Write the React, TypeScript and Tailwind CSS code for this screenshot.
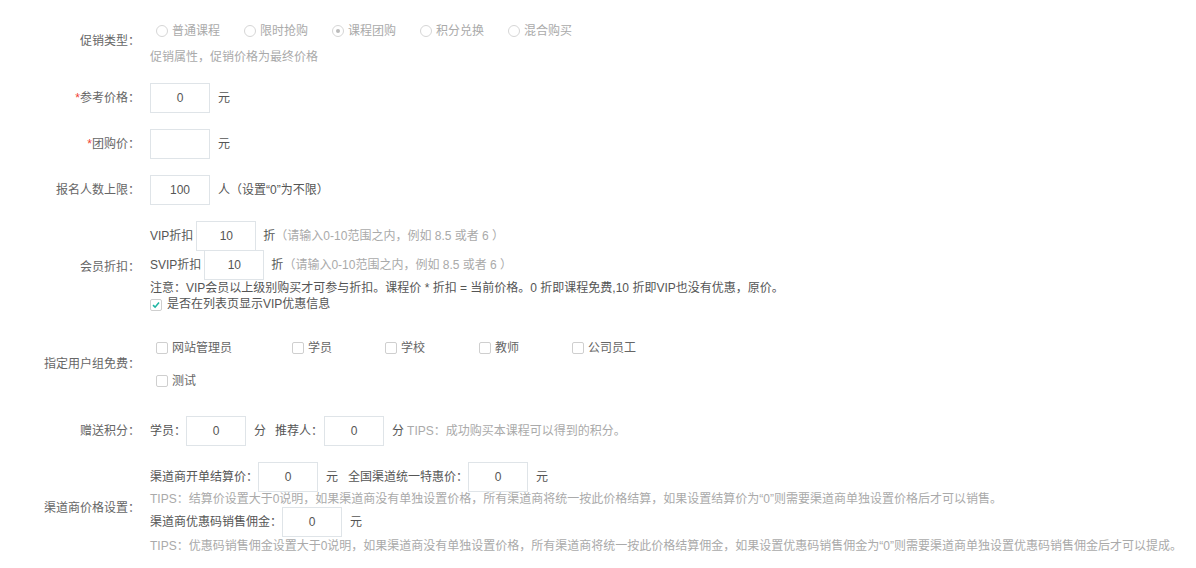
import React from 'react';

const Label = ({ children, required }: { children: React.ReactNode; required?: boolean }) => (
  <div className="w-[140px] shrink-0 text-right text-[#666]">
    {required && <span className="text-[#f04134]">*</span>}
    {children}
  </div>
);

const Box = ({ value = '', className = '' }: { value?: string; className?: string }) => (
  <input
    readOnly
    value={value}
    className={`w-[60px] h-[30px] border border-[#dfe4e8] bg-white text-center text-[#555] outline-none ${className}`}
  />
);

const Radio = ({ label, checked }: { label: string; checked?: boolean }) => (
  <span className="inline-flex items-center gap-[4px] text-[#aaa]">
    <span className="w-[12px] h-[12px] rounded-full border border-[#d6d6d6] flex items-center justify-center">
      {checked && <span className="w-[4px] h-[4px] rounded-full bg-[#bbb]"></span>}
    </span>
    {label}
  </span>
);

const Check = ({ checked }: { checked?: boolean }) => (
  <span className="w-[12px] h-[12px] rounded-[2px] border border-[#cfcfcf] bg-white flex items-center justify-center shrink-0">
    {checked && (
      <svg width="8" height="8" viewBox="0 0 8 8">
        <path d="M1 4.2 L3.1 6.2 L7 1.6" fill="none" stroke="#1fb5a3" strokeWidth="1.6" />
      </svg>
    )}
  </span>
);

const App = () => {
  const promoTypes = [
    { label: '普通课程' },
    { label: '限时抢购' },
    { label: '课程团购', checked: true },
    { label: '积分兑换' },
    { label: '混合购买' },
  ];

  const groups = [
    { name: '网站管理员', w: 'w-[136px]' },
    { name: '学员', w: 'w-[93px]' },
    { name: '学校', w: 'w-[94px]' },
    { name: '教师', w: 'w-[93px]' },
    { name: '公司员工', w: 'w-[93px]' },
    { name: '测试', w: 'w-[93px]' },
  ];

  return (
    <div className="min-h-[568px] bg-white text-[12px] text-[#555] font-['Liberation_Sans','Noto_Sans_CJK_SC',sans-serif] pt-[21px]">
      {/* 促销类型 */}
      <div className="flex items-start gap-[10px]">
        <div className="pt-[10px] leading-5">
          <Label>促销类型：</Label>
        </div>
        <div>
          <div className="flex gap-[24px] pl-[6px] leading-5">
            {promoTypes.map((t, i) => (
              <Radio key={i} label={t.label} checked={t.checked} />
            ))}
          </div>
          <div className="mt-[6px] leading-5 text-[#aaa]">促销属性，促销价格为最终价格</div>
        </div>
      </div>

      {/* 参考价格 */}
      <div className="mt-[16px] flex items-center gap-[10px]">
        <Label required>参考价格：</Label>
        <Box value="0" />
        <span className="ml-[-2px]">元</span>
      </div>

      {/* 团购价 */}
      <div className="mt-[16px] flex items-center gap-[10px]">
        <Label required>团购价：</Label>
        <Box />
        <span className="ml-[-2px]">元</span>
      </div>

      {/* 报名人数上限 */}
      <div className="mt-[16px] flex items-center gap-[10px]">
        <Label>报名人数上限：</Label>
        <Box value="100" />
        <span className="ml-[-2px]">人（设置“0”为不限）</span>
      </div>

      {/* 会员折扣 */}
      <div className="mt-[16px] flex items-center gap-[10px]">
        <Label>会员折扣：</Label>
        <div>
          <div className="flex items-center">
            <span>VIP折扣</span>
            <Box value="10" className="ml-[3px]" />
            <span className="ml-[7px]">折</span>
            <span className="text-[#aaa]">（请输入0-10范围之内，例如 8.5 或者 6 ）</span>
          </div>
          <div className="flex items-center -mt-px">
            <span>SVIP折扣</span>
            <Box value="10" className="ml-[3px]" />
            <span className="ml-[7px]">折</span>
            <span className="text-[#aaa]">（请输入0-10范围之内，例如 8.5 或者 6 ）</span>
          </div>
          <div className="leading-4">
            注意：VIP会员以上级别购买才可参与折扣。课程价 * 折扣 = 当前价格。0 折即课程免费,10 折即VIP也没有优惠，原价。
          </div>
          <div className="flex items-center gap-[5px] leading-[17px]">
            <Check checked />
            <span>是否在列表页显示VIP优惠信息</span>
          </div>
        </div>
      </div>

      {/* 指定用户组免费 */}
      <div className="mt-[18px] flex items-center gap-[10px]">
        <Label>指定用户组免费：</Label>
        <div className="w-[530px] flex flex-wrap pl-[6px]">
          {groups.map((g, i) => (
            <div key={i} className={`${g.w} h-[33px] flex items-center gap-[4px]`}>
              <Check />
              <span className="text-[#666]">{g.name}</span>
            </div>
          ))}
        </div>
      </div>

      {/* 赠送积分 */}
      <div className="mt-[19px] flex items-center gap-[10px]">
        <Label>赠送积分：</Label>
        <div className="flex items-center">
          <span>学员：</span>
          <Box value="0" />
          <span className="ml-[8px]">分</span>
          <span className="ml-[9px]">推荐人：</span>
          <Box value="0" className="ml-px" />
          <span className="ml-[8px]">分</span>
          <span className="ml-[3px] text-[#aaa]">TIPS：成功购买本课程可以得到的积分。</span>
        </div>
      </div>

      {/* 渠道商价格设置 */}
      <div className="mt-[16px] flex items-center gap-[10px]">
        <Label>渠道商价格设置：</Label>
        <div>
          <div className="flex items-center">
            <span>渠道商开单结算价：</span>
            <Box value="0" />
            <span className="ml-[8px]">元</span>
            <span className="ml-[10px]">全国渠道统一特惠价：</span>
            <Box value="0" />
            <span className="ml-[8px]">元</span>
          </div>
          <div className="leading-[14px] text-[#aaa]">
            TIPS：结算价设置大于0说明，如果渠道商没有单独设置价格，所有渠道商将统一按此价格结算，如果设置结算价为“0”则需要渠道商单独设置价格后才可以销售。
          </div>
          <div className="flex items-center mt-px">
            <span>渠道商优惠码销售佣金：</span>
            <Box value="0" />
            <span className="ml-[8px]">元</span>
          </div>
          <div className="leading-4 mt-px text-[#aaa] whitespace-nowrap">
            TIPS：优惠码销售佣金设置大于0说明，如果渠道商没有单独设置价格，所有渠道商将统一按此价格结算佣金，如果设置优惠码销售佣金为“0”则需要渠道商单独设置优惠码销售佣金后才可以提成。
          </div>
        </div>
      </div>
    </div>
  );
};

export default App;
